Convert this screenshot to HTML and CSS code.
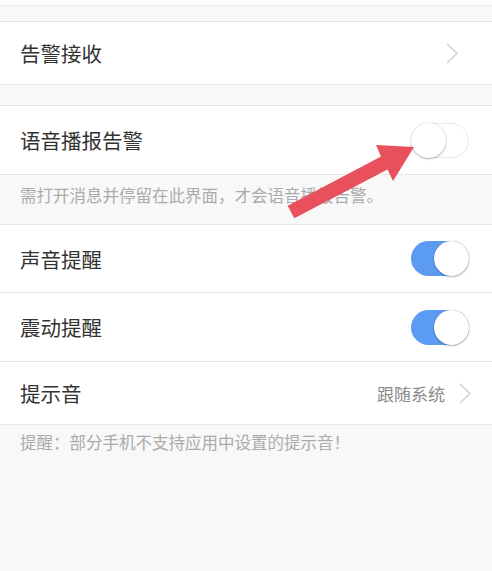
FILE: index.html
```html
<!DOCTYPE html>
<html lang="zh-CN">
<head>
<meta charset="utf-8">
<title>设置</title>
<link rel="stylesheet" href="styles.css">
</head>
<body>
<div class="page">
  <div class="top"></div>
  <div class="gap gap-a"></div>
  <div class="group">
    <div class="row row-62">
      <span class="label">告警接收</span>
      <svg class="chev chev-in" viewBox="0 0 12 21" width="12" height="21"><polyline points="1,1 11,10.5 1,20" fill="none" stroke="#cfcfcf" stroke-width="1.4"/></svg>
    </div>
  </div>
  <div class="gap gap-b"></div>
  <div class="group">
    <div class="row row-68">
      <span class="label">语音播报告警</span>
      <span class="toggle off"><span class="knob"></span></span>
    </div>
  </div>
  <div class="note note-a">需打开消息并停留在此界面，才会语音播报告警。</div>
  <div class="group">
    <div class="row row-67 sep">
      <span class="label">声音提醒</span>
      <span class="toggle on"><span class="knob"></span></span>
    </div>
    <div class="row row-68 sep">
      <span class="label">震动提醒</span>
      <span class="toggle on"><span class="knob"></span></span>
    </div>
    <div class="row row-62">
      <span class="label">提示音</span>
      <span class="right">
        <span class="value">跟随系统</span>
        <svg class="chev" viewBox="0 0 12 21" width="12" height="21"><polyline points="1,1 11,10.5 1,20" fill="none" stroke="#cfcfcf" stroke-width="1.4"/></svg>
      </span>
    </div>
  </div>
  <div class="note note-b">提醒：部分手机不支持应用中设置的提示音！</div>

  <svg class="arrow" viewBox="0 0 492 571" width="492" height="571">
    <polygon points="287.7,205.8 381,156.5 376,145 414,147 393,181 387.5,169.5 294.3,218.2" fill="#e8505c"/>
  </svg>
</div>
</body>
</html>
```

FILE: styles.css
```css
* { box-sizing: border-box; }
html, body {
  margin: 0;
  padding: 0;
  background: #f8f8f8;
}
body {
  font-family: "Noto Sans CJK SC", "Noto Sans", sans-serif;
  color: #333;
}
.page {
  position: relative;
  width: 492px;
  min-height: 571px;
  overflow: hidden;
}
.top {
  height: 6px;
  background: #fcfcfc;
  border-bottom: 1px solid #e8e8e8;
}
.gap-a { height: 15px; }
.gap-b { height: 20px; }
.group {
  background: #fff;
  border-top: 1px solid #e6e6e6;
  border-bottom: 1px solid #e6e6e6;
}
.row {
  display: flex;
  align-items: center;
  justify-content: space-between;
  padding: 0 23px 0 20px;
}
.row.sep { border-bottom: 1px solid #e6e6e6; }
.row-62 { height: 62px; }
.row-67 { height: 67px; }
.row-68 { height: 68px; }
.row-67.sep { height: 68px; }
.row-68.sep { height: 69px; }
.label {
  font-size: 20.5px;
  line-height: 24px;
  color: #333;
}
.chev { display: block; }
.chev-in { margin-right: 11px; }
.right {
  display: flex;
  align-items: center;
  gap: 14px;
  margin-right: -2px;
}
.value {
  font-size: 17px;
  color: #8a8a8a;
}
.toggle {
  position: relative;
  display: block;
  width: 58px;
  height: 35px;
  border-radius: 18px;
}
.toggle.off {
  background: #fff;
  border: 1px solid #e9e9e9;
}
.toggle.on {
  background: #5b9cf2;
}
.knob {
  position: absolute;
  top: 0;
  width: 35px;
  height: 35px;
  border-radius: 50%;
  background: #fff;
  box-shadow: 0 1px 2px rgba(0,0,0,0.28), 0 0 0 0.5px rgba(0,0,0,0.1);
}
.toggle.off .knob { left: -1px; top: -1px; }
.toggle.on .knob { right: 0; }
.note {
  font-size: 16.5px;
  color: #ababab;
  padding-left: 20px;
}
.note-a {
  height: 49px;
  line-height: 20px;
  padding-top: 10px;
}
.note-b {
  line-height: 20px;
  padding-top: 7px;
}
.arrow {
  position: absolute;
  left: 0;
  top: 0;
  pointer-events: none;
}
```
